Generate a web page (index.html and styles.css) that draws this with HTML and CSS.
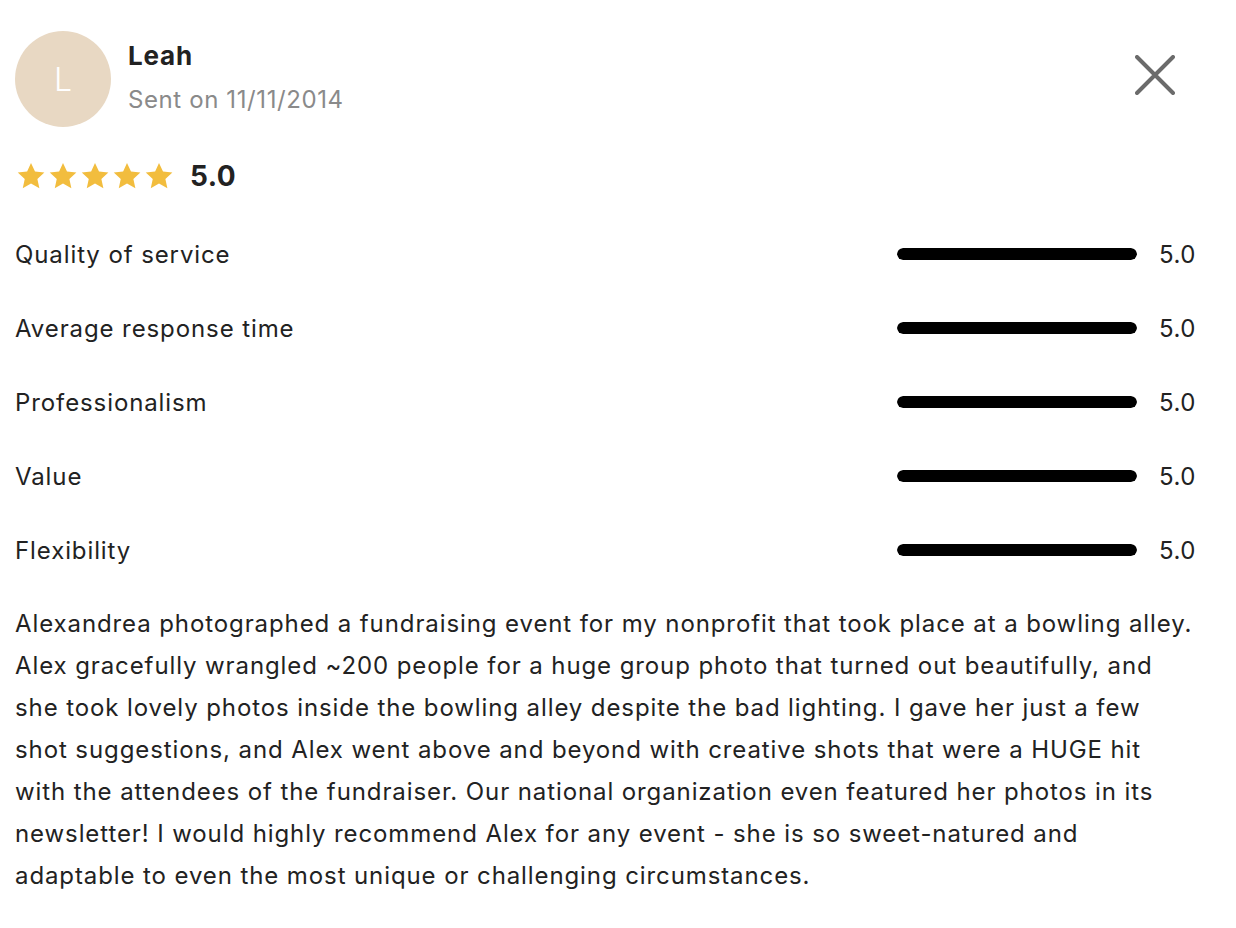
FILE: index.html
```html
<!DOCTYPE html>
<html>
<head>
<meta charset="utf-8">
<link rel="stylesheet" href="styles.css">
</head>
<body>
<div class="review">
  <div class="header">
    <div class="author">
      <div class="avatar">L</div>
      <div class="meta">
        <div class="name">Leah</div>
        <div class="date">Sent on 11/11/2014</div>
      </div>
    </div>
    <button class="close" aria-label="Close">
      <svg width="40" height="40" viewBox="0 0 40 40"><path d="M2 2 L38 38 M38 2 L2 38" stroke="#6b6b6b" stroke-width="4" stroke-linecap="round"/></svg>
    </button>
  </div>
  <div class="overall">
    <div class="stars">
      <svg class="star" viewBox="0 0 24 24"><path d="M12 1.5l3.2 6.9 7.5.8-5.6 5.1 1.6 7.4L12 17.9l-6.6 3.8 1.6-7.4-5.6-5.1 7.5-.8z"/></svg>
      <svg class="star" viewBox="0 0 24 24"><path d="M12 1.5l3.2 6.9 7.5.8-5.6 5.1 1.6 7.4L12 17.9l-6.6 3.8 1.6-7.4-5.6-5.1 7.5-.8z"/></svg>
      <svg class="star" viewBox="0 0 24 24"><path d="M12 1.5l3.2 6.9 7.5.8-5.6 5.1 1.6 7.4L12 17.9l-6.6 3.8 1.6-7.4-5.6-5.1 7.5-.8z"/></svg>
      <svg class="star" viewBox="0 0 24 24"><path d="M12 1.5l3.2 6.9 7.5.8-5.6 5.1 1.6 7.4L12 17.9l-6.6 3.8 1.6-7.4-5.6-5.1 7.5-.8z"/></svg>
      <svg class="star" viewBox="0 0 24 24"><path d="M12 1.5l3.2 6.9 7.5.8-5.6 5.1 1.6 7.4L12 17.9l-6.6 3.8 1.6-7.4-5.6-5.1 7.5-.8z"/></svg>
    </div>
    <div class="score">5.0</div>
  </div>
  <div class="ratings">
    <div class="row"><span class="label">Quality of service</span><span class="bar"><span class="fill" style="width:100%"></span></span><span class="val">5.0</span></div>
    <div class="row"><span class="label">Average response time</span><span class="bar"><span class="fill" style="width:100%"></span></span><span class="val">5.0</span></div>
    <div class="row"><span class="label">Professionalism</span><span class="bar"><span class="fill" style="width:100%"></span></span><span class="val">5.0</span></div>
    <div class="row"><span class="label">Value</span><span class="bar"><span class="fill" style="width:100%"></span></span><span class="val">5.0</span></div>
    <div class="row"><span class="label">Flexibility</span><span class="bar"><span class="fill" style="width:100%"></span></span><span class="val">5.0</span></div>
  </div>
  <p class="text">Alexandrea photographed a fundraising event for my nonprofit that took place at a bowling alley. Alex gracefully wrangled ~200 people for a huge group photo that turned out beautifully, and she took lovely photos inside the bowling alley despite the bad lighting. I gave her just a few shot suggestions, and Alex went above and beyond with creative shots that were a HUGE hit with the attendees of the fundraiser. Our national organization even featured her photos in its newsletter! I would highly recommend Alex for any event - she is so sweet-natured and adaptable to even the most unique or challenging circumstances.</p>
</div>
</body>
</html>
```
FILE: styles.css
```css
* { box-sizing: border-box; }
html, body { margin: 0; padding: 0; background: #fff; }
body {
  font-family: "Inter", "Liberation Sans", sans-serif;
  color: #222;
}
.review {
  width: 1236px;
  padding: 31px 36px 0 15px;
}
.header {
  display: flex;
  justify-content: space-between;
  align-items: flex-start;
}
.author { display: flex; align-items: center; gap: 17px; }
.avatar {
  width: 96px; height: 96px; border-radius: 50%;
  background: #e8d8c3;
  color: #fff;
  font-size: 32px;
  font-weight: 300;
  display: flex; align-items: center; justify-content: center;
}
.meta { display: flex; flex-direction: column; gap: 13px; margin-top: -3px; }
.name { font-size: 26px; font-weight: 700; color: #222; line-height: 32px; letter-spacing: 0.8px; }
.date { font-size: 24px; color: #8a8a8a; line-height: 30px; letter-spacing: 0.6px; }
.close {
  border: 0; background: none; padding: 0; margin: 24px 25px 0 0;
  width: 40px; height: 40px; cursor: pointer;
}
.close svg { display: block; }
.overall {
  display: flex; align-items: center; gap: 16px;
  margin-top: 32px;
}
.stars { display: flex; gap: 2px; padding-left: 1px; }
.star { width: 30px; height: 30px; fill: #f2bd3e; display: block; }
.score { font-size: 28px; font-weight: 700; color: #222; letter-spacing: 0.5px; }
.ratings { margin-top: 24px; display: flex; flex-direction: column; }
.row {
  display: flex; align-items: center;
  height: 74px;
}
.label { flex: 1; font-size: 24px; color: #222; letter-spacing: 0.9px; }
.bar { width: 240px; height: 12px; border-radius: 6px; background: #e5e5e5; display: block; overflow: hidden; margin-right: 22px; }
.fill { display: block; height: 100%; background: #000; border-radius: 6px; }
.val { font-size: 24px; color: #222; width: 41px; letter-spacing: 0.5px; }
.text {
  margin: 16px 6px 0 0;
  font-size: 24px;
  line-height: 42px;
  color: #222;
  letter-spacing: 0.9px;
}
```
